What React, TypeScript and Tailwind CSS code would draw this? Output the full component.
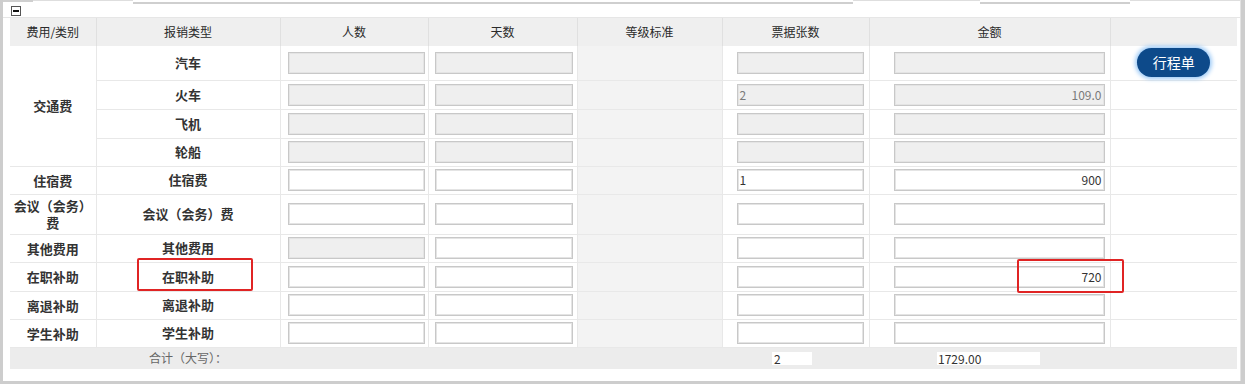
import React from "react";

type Row = {
  cat?: string;
  span?: number;
  type: string;
  h: string;
  gray?: boolean;
  grayPeople?: boolean;
  btn?: boolean;
  tickets?: string;
  amount?: string;
  dim?: boolean;
};

const rows: Row[] = [
  { cat: "交通费", span: 4, type: "汽车", h: "h-[34px]", gray: true, btn: true },
  { type: "火车", h: "h-[29px]", gray: true, tickets: "2", amount: "109.0", dim: true },
  { type: "飞机", h: "h-[29px]", gray: true },
  { type: "轮船", h: "h-[28px]", gray: true },
  { cat: "住宿费", type: "住宿费", h: "h-[28px]", tickets: "1", amount: "900" },
  { cat: "会议（会务）费", type: "会议（会务）费", h: "h-[40px]" },
  { cat: "其他费用", type: "其他费用", h: "h-[28px]", grayPeople: true },
  { cat: "在职补助", type: "在职补助", h: "h-[29px]", amount: "720" },
  { cat: "离退补助", type: "离退补助", h: "h-[28px]" },
  { cat: "学生补助", type: "学生补助", h: "h-[28px]" },
];

const Field = ({ v, right, gray, dim, cls }: { v?: string; right?: boolean; gray?: boolean; dim?: boolean; cls: string }) => (
  <div
    className={`h-[22px] border border-[#c8c8c8] shadow-[inset_0_0_0_1px_#e4e4e4] flex items-center px-[2px] text-[12px] leading-none ${
      gray ? "bg-[#efefef]" : "bg-white"
    } ${right ? "justify-end" : ""} ${dim ? "text-[#7a7a7a]" : "text-[#333]"} ${cls}`}
  >
    {v}
  </div>
);

const td = "border-b border-r border-[#e8e8e8] p-0 align-middle";

export default function App() {
  return (
    <div className="relative w-[1245px] h-[384px] bg-[#cdcdcd] pl-[3px] pr-[4px] pb-[3px] font-['Noto_Sans_CJK_SC',sans-serif]">
      <div className="h-full bg-white flex flex-col border-r border-[#e2e2e2]">
        {/* cut-off inputs from the block above */}
        <div className="h-[4px] flex">
          <div className="w-[30px] border-t-2 border-[#cfcfcf]" />
          <div className="w-[100px] border-t border-[#dedede]" />
          <div className="w-[720px] border-b-2 border-[#cfcfcf] bg-white" />
          <div className="w-[127px] border-t border-[#dedede]" />
          <div className="w-[150px] border-b-2 border-[#cfcfcf]" />
          <div className="flex-1 border-t border-[#dedede]" />
        </div>
        <div className="h-[14px] flex items-center pl-[8px] border-b border-[#e6e6e6]">
          <div className="w-[10px] h-[10px] border border-[#555] flex items-center justify-center bg-white">
            <div className="w-[6px] h-[2px] bg-[#111]" />
          </div>
        </div>
        <table className="ml-[7px] w-[1227px] table-fixed border-collapse text-[#333]">
          <colgroup>
            <col className="w-[86px]" />
            <col className="w-[184px]" />
            <col className="w-[148px]" />
            <col className="w-[149px]" />
            <col className="w-[145px]" />
            <col className="w-[147px]" />
            <col className="w-[241px]" />
            <col className="w-[127px]" />
          </colgroup>
          <thead>
            <tr className="h-[28px] bg-[#efefef] text-[12px] text-[#2a2a2a]">
              <th className="font-normal border-r border-[#e0e0e0]">费用/类别</th>
              <th className="font-normal border-r border-[#e0e0e0]">报销类型</th>
              <th className="font-normal border-r border-[#e0e0e0]">人数</th>
              <th className="font-normal border-r border-[#e0e0e0]">天数</th>
              <th className="font-normal border-r border-[#e0e0e0]">等级标准</th>
              <th className="font-normal border-r border-[#e0e0e0]">票据张数</th>
              <th className="font-normal border-r border-[#e0e0e0]">金额</th>
              <th className="font-normal" />
            </tr>
          </thead>
          <tbody className="text-[13px] font-bold">
            {rows.map((r, i) => (
              <tr key={i} className={r.h}>
                {r.cat && (
                  <td rowSpan={r.span} className={`${td} text-center leading-[17px]`}>
                    {r.cat}
                  </td>
                )}
                <td className={`${td} text-center`}>{r.type}</td>
                <td className={td}>
                  <Field cls="ml-[7px] w-[137px]" gray={r.gray || r.grayPeople} />
                </td>
                <td className={td}>
                  <Field cls="ml-[6px] w-[138px]" gray={r.gray} />
                </td>
                <td className={`${td} bg-[#f3f3f3]`} />
                <td className={td}>
                  <Field cls="ml-[14px] w-[127px] font-normal" gray={r.gray} v={r.tickets} dim={r.dim} />
                </td>
                <td className={td}>
                  <Field cls="ml-[24px] w-[211px] font-normal" gray={r.gray} v={r.amount} right dim={r.dim} />
                </td>
                <td className="border-b border-[#e8e8e8] p-0 align-middle">
                  {r.btn && (
                    <div className="flex justify-center">
                      <button className="w-[73px] h-[29px] rounded-full bg-[#0d4a8a] text-white text-[14px] font-normal shadow-[0_0_4px_2px_#9ccaf7]">
                        行程单
                      </button>
                    </div>
                  )}
                </td>
              </tr>
            ))}
            <tr className="h-[22px] bg-[#ececec] text-[12px] font-normal text-[#666]">
              <td />
              <td className="text-center">合计（大写）：</td>
              <td colSpan={3} />
              <td>
                <div className="ml-[50px] w-[40px] h-[13px] bg-white text-[#333] leading-[13px] pl-[2px]">2</div>
              </td>
              <td>
                <div className="ml-[68px] w-[103px] h-[13px] bg-white text-[#333] leading-[13px] pl-[1px]">1729.00</div>
              </td>
              <td />
            </tr>
          </tbody>
        </table>
      </div>
      <div className="absolute left-[137px] top-[258px] w-[116px] h-[33px] border-2 border-[#e02424] rounded-[2px]" />
      <div className="absolute left-[1017px] top-[259px] w-[107px] h-[34px] border-2 border-[#e02424] rounded-[2px]" />
    </div>
  );
}
